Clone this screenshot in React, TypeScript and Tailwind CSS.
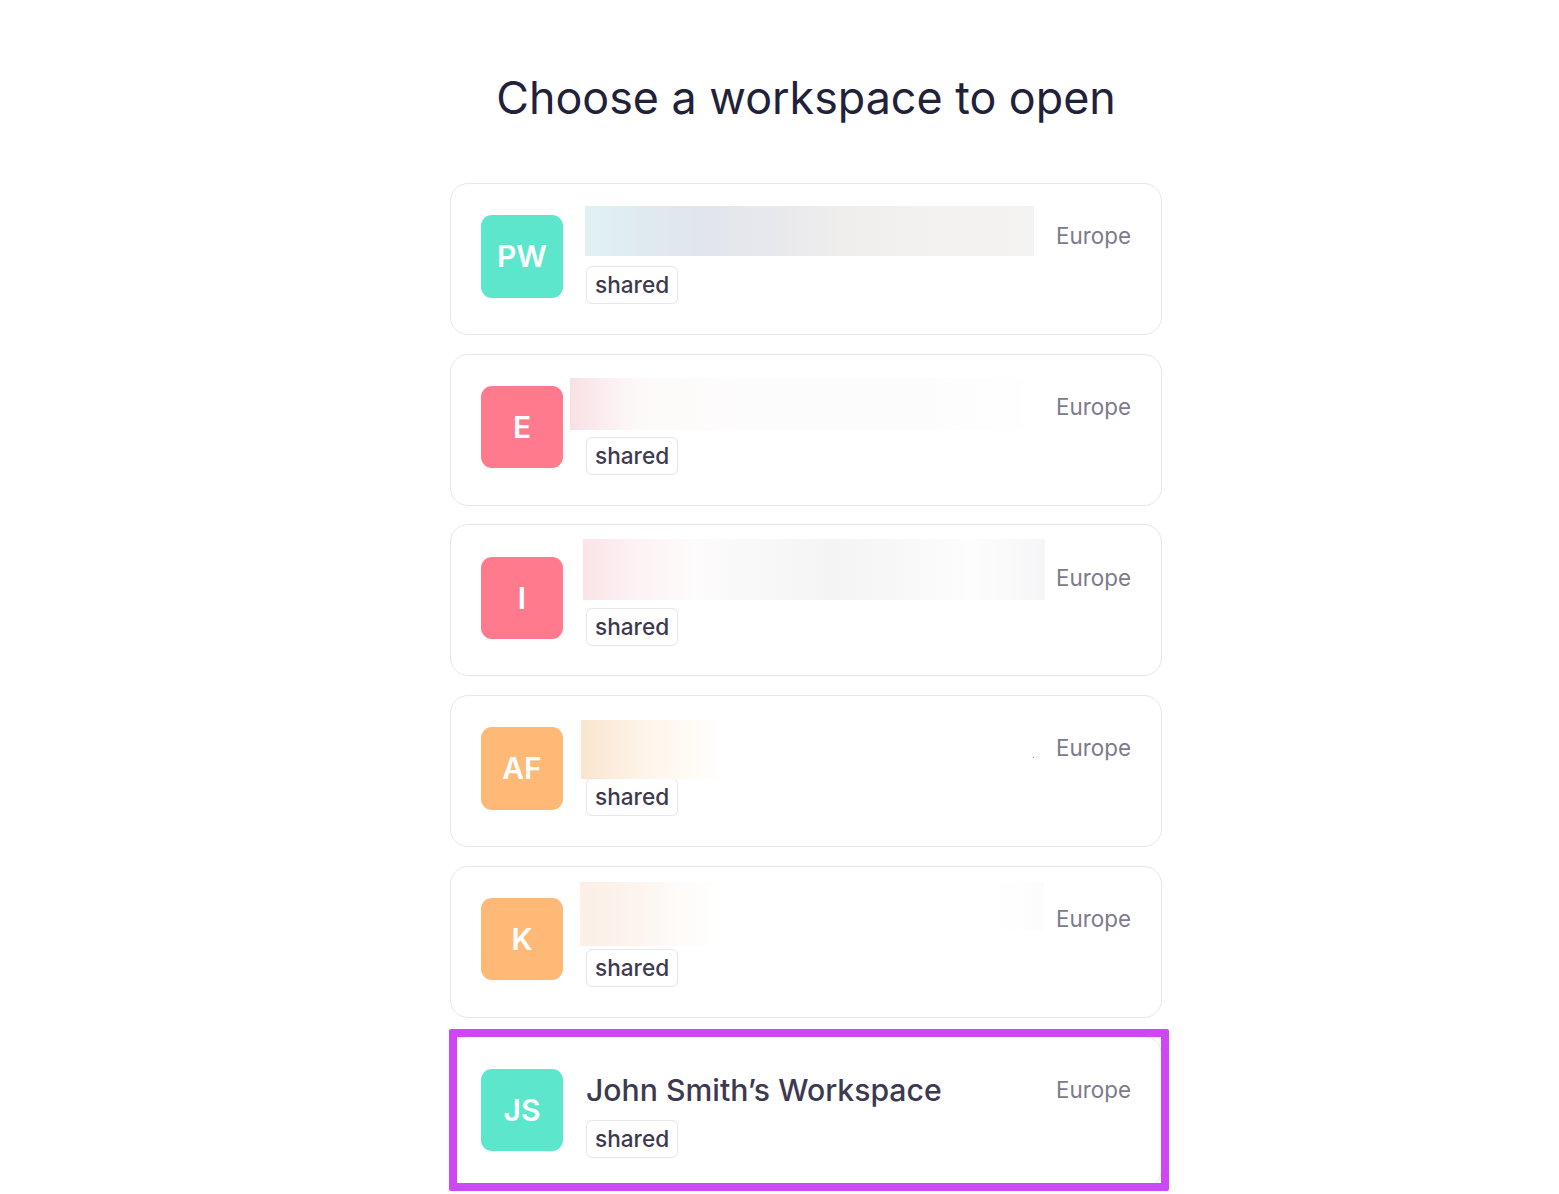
type Workspace = {
  initials: string;
  color: string;
  name?: string;
  blurs: string[];
  speck?: boolean;
  highlighted?: boolean;
};

const workspaces: Workspace[] = [
  {
    initials: "PW",
    color: "bg-[#5ce6cb]",
    blurs: [
      "left-[134px] top-[22px] w-[449px] h-[50px] bg-[linear-gradient(90deg,#e0f1f3_0%,#dfeaef_14%,#e1e5ec_27%,#e9e9ec_44%,#f1efed_62%,#f3f2f0_80%,#f4f3f2_100%)]",
    ],
  },
  {
    initials: "E",
    color: "bg-[#ff7a8d]",
    blurs: [
      "left-[119px] top-[23px] w-[453px] h-[52px] bg-[linear-gradient(90deg,#f9e0e5_0%,#fbeef0_8%,#fdf9f9_15%,#fdfcfc_40%,#fdfcfc_70%,#fefefe_100%)]",
    ],
  },
  {
    initials: "I",
    color: "bg-[#ff7a8d]",
    blurs: [
      "left-[132px] top-[14px] w-[462px] h-[61px] bg-[linear-gradient(90deg,#fbe4e8_0%,#fdf2f4_12%,#fdfbfb_24%,#f8f8f8_40%,#f4f4f4_54%,#f9f9f9_72%,#fdfdfd_84%,#f6f6f8_100%)]",
    ],
  },
  {
    initials: "AF",
    color: "bg-[#ffb976]",
    blurs: [
      "left-[130px] top-[24px] w-[145px] h-[59px] bg-[linear-gradient(90deg,#f9e4cf_0%,#fdf0e2_30%,#fff8f0_60%,#ffffff_100%)]",
    ],
    speck: true,
  },
  {
    initials: "K",
    color: "bg-[#ffb976]",
    blurs: [
      "left-[129px] top-[15px] w-[140px] h-[64px] bg-[linear-gradient(90deg,#fbefe6_0%,#fcf4ee_40%,#fefbf9_70%,#ffffff_100%)]",
      "left-[532px] top-[15px] w-[61px] h-[48px] bg-[linear-gradient(90deg,#ffffff_0%,#fefefe_50%,#fcfcfd_100%)]",
    ],
  },
  {
    initials: "JS",
    color: "bg-[#5ce6cb]",
    name: "John Smith’s Workspace",
    blurs: [],
    highlighted: true,
  },
];

function WorkspaceCard({ workspace }: { workspace: Workspace }) {
  return (
    <div className="relative flex h-[152px] items-start rounded-[18px] border border-[#e7e7ea] bg-white pl-[30px] pr-[30px] pt-[31.3px]">
      <div
        className={`flex h-[82.4px] w-[82px] shrink-0 items-center justify-center rounded-[11px] pt-[0.5px] text-[30px] font-semibold text-white ${workspace.color}`}
      >
        {workspace.initials}
      </div>
      <div className="ml-[23px] flex min-w-0 flex-1 flex-col items-start">
        <div className="h-[42px] text-[30.2px] font-medium leading-[42px] text-[#3d3a50]">
          {workspace.name}
        </div>
        <span className="mt-[9px] rounded-[6px] border border-[#e7e7ea] bg-white px-2 text-[22.6px] font-medium leading-[36px] text-[#3d3a50]">
          shared
        </span>
      </div>
      <span className="text-[22.4px] leading-[42px] text-[#7d7a8c]">Europe</span>

      {workspace.blurs.map((blur) => (
        <div key={blur} className={`absolute ${blur}`} />
      ))}
      {workspace.speck && (
        <div className="absolute left-[582px] top-[61px] h-px w-px bg-[#7f9ccb]" />
      )}
      {workspace.highlighted && (
        <div className="absolute left-[-2px] top-[-8.5px] h-[162px] w-[720px] rounded-[2px] border-[8px] border-[#cd47f3]" />
      )}
    </div>
  );
}

export default function App() {
  return (
    <div className="h-[1194px] overflow-hidden bg-white font-['Inter',sans-serif]">
      <div className="ml-[450px] w-[712px]">
        <h1 className="flex h-[183px] items-start justify-center pt-[66px] text-[44.8px] font-normal leading-[64px] text-[#22213a]">
          Choose a workspace to open
        </h1>
        <div className="flex flex-col gap-[18.7px]">
          {workspaces.map((workspace) => (
            <WorkspaceCard key={workspace.initials} workspace={workspace} />
          ))}
        </div>
      </div>
    </div>
  );
}
